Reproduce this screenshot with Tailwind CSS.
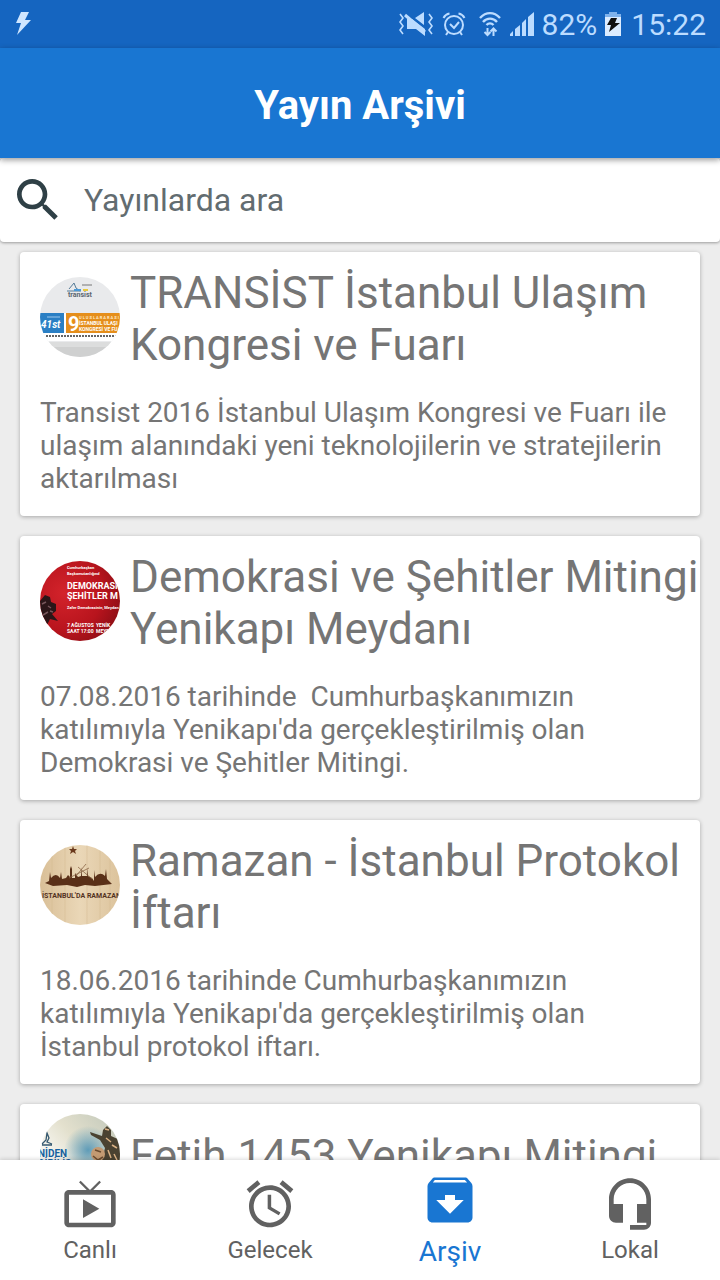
<!DOCTYPE html>
<html lang="tr">
<head>
  <meta charset="UTF-8">
  <meta name="viewport" content="width=device-width, initial-scale=1.0">
  <title>Yayın Arşivi</title>
  <script src="https://cdn.jsdelivr.net/npm/@tailwindcss/browser@4"></script>
</head>
<body class="h-screen flex flex-col overflow-hidden bg-[#ededed] text-[#757575] font-['Roboto',sans-serif]">

  <!-- status bar -->
  <div class="h-12 shrink-0 flex items-center justify-between pl-4 pr-[14px] bg-[#1565c0] text-[#bcdcff]">
    <svg class="w-4 h-6" viewBox="0 0 16 24" fill="#cfe6ff"><path d="M5 0h8L9 8h6L1 23l4-12H0z"/></svg>
    <div class="flex items-center">
      <svg class="w-9 h-7" viewBox="0 0 36 28" fill="#bcdcff">
        <path d="M26 2v13L17 8zM9 9h5l13 10v7l-9-7H9z"/>
        <path d="M7 5l20 17" stroke="#bcdcff" stroke-width="3"/>
        <path d="M2 4l3 4-3 4 3 4-3 4 3 4M31 4l3 4-3 4 3 4-3 4 3 4" fill="none" stroke="#bcdcff" stroke-width="1.6"/>
      </svg>
      <svg class="w-6 h-6 ml-2" viewBox="0 0 24 24" fill="none" stroke="#bcdcff" stroke-width="2">
        <circle cx="12" cy="13" r="9"/><path d="M1.500 6c1-2 3-4 6-4.500M22.500 6c-1-2-3-4-6-4.500M8 12l4 4 5-6M6 20l-2 3M18 20l2 3"/>
      </svg>
      <svg class="w-6 h-7 ml-3" viewBox="0 0 24 28" fill="none" stroke="#bcdcff" stroke-width="2.400">
        <path d="M2 8c6-6.500 14-6.500 20 0M5 12c4-4.500 10-4.500 14 0M8.500 15c2-2 5-2 7 0"/>
        <path d="M9.500 18v7M6.500 22l3 3 3-3M15.500 26v-7M12.500 21.500l3-3 3 3" stroke-width="2"/>
      </svg>
      <svg class="w-6 h-6 ml-2" viewBox="0 0 24 24" fill="#bcdcff">
        <path d="M0 24v-2l3-3v5zM5 24v-7l5-4v11zM12 24V11l4-4v17zM18 24V5l6-5v24z"/>
      </svg>
      <span class="ml-2 pt-px text-[30px] leading-9">82%</span>
      <svg class="w-4 h-6 ml-2" viewBox="0 0 16 24">
        <path d="M4 0h8v2h4v4H0V2h4z" fill="#7fb2ec"/><path d="M0 5h16v19H0z" fill="#dcecff"/>
        <path d="M6 6h6l-2 5h5L4 20l2-7H2z" fill="#111"/>
      </svg>
      <span class="ml-[10px] pt-px text-[30px] leading-9">15:22</span>
    </div>
  </div>

  <header class="relative z-10 h-[110px] shrink-0 flex items-center justify-center pt-[6px] bg-[#1976d2] shadow-[0_2px_6px_rgba(0,0,0,0.4)]">
    <h1 class="text-[40px] leading-[48px] font-bold text-white">Yayın Arşivi</h1>
  </header>

  <form class="h-[84px] shrink-0 flex items-center pl-[10px] pr-4 rounded bg-white shadow-[0_1px_3px_rgba(0,0,0,0.35)]">
    <label for="search" aria-label="Ara">
      <svg class="w-14 h-14" viewBox="0 0 24 24" fill="#2f4046"><path d="M15.500 14h-.79l-.28-.27C15.410 12.590 16 11.110 16 9.500 16 5.910 13.090 3 9.500 3S3 5.910 3 9.500 5.910 16 9.500 16c1.610 0 3.090-.59 4.230-1.570l.27.28v.79l5 4.990L20.490 19l-4.990-5zm-6 0C7.010 14 5 11.990 5 9.500S7.010 5 9.500 5 14 7.010 14 9.500 11.990 14 9.500 14z"/></svg>
    </label>
    <input id="search" type="text" placeholder="Yayınlarda ara" class="ml-[18px] flex-1 min-w-0 text-[32px] leading-10 text-[#37474f] placeholder:text-[#626c70] focus:outline-none">
  </form>

  <main class="flex-1 min-h-0 overflow-y-auto [scrollbar-width:none] flex flex-col gap-5 px-5 pt-[10px]">

    <article class="shrink-0 rounded bg-white pt-[10px] pb-[21px] shadow-[0_1px_4px_rgba(0,0,0,0.3)]">
      <div class="flex items-center gap-[10px] pl-5">
        <svg class="w-20 h-20 shrink-0 rounded-full" viewBox="0 0 80 80">
          <rect width="80" height="80" fill="#e9eaec"/>
          <path d="M29 12l5-6 2 5 4 3M27 14h14" fill="none" stroke="#557a96" stroke-width="1"/>
          <path d="M42 8h10" stroke="#777" stroke-width="1"/>
          <path d="M34 13h7" stroke="#4a9ad8" stroke-width="2"/><path d="M43 13h5" stroke="#e9c93c" stroke-width="2"/>
          <text x="28" y="20" font-size="7" font-weight="bold" fill="#5b6670">transist</text>
          <rect y="36" width="80" height="28" fill="#fff"/>
          <rect y="36" width="24" height="20" fill="#2a7fc4"/>
          <rect x="26" y="36" width="54" height="20" fill="#e58e1b"/>
          <path d="M7 40h13" stroke="#9cc8ec" stroke-width="1"/>
          <text x="1" y="51" font-size="10" font-weight="bold" font-style="italic" fill="#fff">41st</text>
          <text x="28" y="54" font-size="20" font-weight="bold" fill="#fff">9</text>
          <g font-weight="bold" fill="#fff">
            <text x="39" y="42" font-size="4" fill="#ffe9c7">U L U S L A R A R A S I</text>
            <text x="39" y="48" font-size="5">İSTANBUL ULAŞI</text>
            <text x="39" y="54" font-size="5">KONGRESİ VE FU</text>
          </g>
          <path d="M6 59h70" stroke="#333" stroke-width="1.500" stroke-dasharray="2 1"/>
          <rect y="65" width="80" height="5" fill="#dcdddd"/><rect y="70" width="80" height="10" fill="#cfd0d0"/>
        </svg>
        <h2 class="pt-[5px] pb-px text-[44px] leading-[52px]">TRANSİST İstanbul Ulaşım Kongresi ve Fuarı</h2>
      </div>
      <p class="mt-6 px-5 text-[28px] leading-[33px]">Transist 2016 İstanbul Ulaşım Kongresi ve Fuarı ile ulaşım alanındaki yeni teknolojilerin ve stratejilerin aktarılması</p>
    </article>

    <article class="shrink-0 rounded bg-white pt-[10px] pb-[21px] shadow-[0_1px_4px_rgba(0,0,0,0.3)]">
      <div class="flex items-center gap-[10px] pl-5">
        <svg class="w-20 h-20 shrink-0 rounded-full" viewBox="0 0 80 80">
          <defs><radialGradient id="red" cx="0.3" cy="0.4" r="0.8"><stop offset="0" stop-color="#d3232b"/><stop offset="0.600" stop-color="#b8141d"/><stop offset="1" stop-color="#860d14"/></radialGradient></defs>
          <rect width="80" height="80" fill="url(#red)"/>
          <path d="M0 40l5-6 5 2 1 5 5 2v7l-4 3 6 7-8-2-3 6-7 1z" fill="#2b1618"/>
          <path d="M2 43l4-2M8 45l3 2M3 54l5-3M10 50l3 1" stroke="#76555a" stroke-width="1.500"/>
          <g fill="#fff" font-weight="bold">
            <text x="27" y="8" font-size="4">Cumhurbaşkan</text>
            <text x="27" y="14" font-size="4">Başkomutanlığınd</text>
            <text x="27" y="28" font-size="9">DEMOKRASİ</text>
            <text x="27" y="38" font-size="9">ŞEHİTLER M</text>
            <text x="27" y="48" font-size="4">Zafer Demokrasinin, Meydan</text>
            <text x="27" y="66" font-size="5">7 AĞUSTOS</text><text x="56" y="66" font-size="5">YENİK</text>
            <text x="27" y="72" font-size="5">SAAT 17:00</text><text x="56" y="72" font-size="5">MEYD</text>
          </g>
        </svg>
        <h2 class="pt-[5px] pb-px text-[44px] leading-[52px]">Demokrasi ve Şehitler Mitingi Yenikapı Meydanı</h2>
      </div>
      <p class="mt-6 px-5 text-[28px] leading-[33px]">07.08.2016 tarihinde&nbsp; Cumhurbaşkanımızın katılımıyla Yenikapı'da gerçekleştirilmiş olan Demokrasi ve Şehitler Mitingi.</p>
    </article>

    <article class="shrink-0 rounded bg-white pt-[10px] pb-[21px] shadow-[0_1px_4px_rgba(0,0,0,0.3)]">
      <div class="flex items-center gap-[10px] pl-5">
        <svg class="w-20 h-20 shrink-0 rounded-full" viewBox="0 0 80 80">
          <defs><linearGradient id="wood"><stop offset="0" stop-color="#d9bf97"/><stop offset="0.500" stop-color="#ead7b7"/><stop offset="1" stop-color="#dcc39c"/></linearGradient></defs>
          <rect width="80" height="80" fill="url(#wood)"/>
          <path d="M12 0v80M25 0v80M47 0v80M60 0v80M70 0v80" stroke="#d2b88f" stroke-width="1" opacity="0.500"/>
          <path d="M33 1l1 3h3l-2 2 1 3-3-2-3 2 1-3-2-2h3z" fill="#6b3a1d"/>
          <path d="M5 38l4-2 1-9 1 6q5-6 9 0l1-6 1 7 4-1 2-3 2 2V24l1-3 1 3v9h3v-5l3 4 3-1V22l1 9h5v-8l1 8 4 2 2 3V25l1 7q5-6 10-1l1-7 1 10 5 5-17 2-10-1-8 2-10-2-14 1z" fill="#5a3018"/>
          <path d="M29 33l20-10M38 22l14 12M36 31l10-12" stroke="#8b6747" stroke-width="0.800"/>
          <text x="2" y="53" font-size="7" font-weight="bold" fill="#54321f">İSTANBUL'DA RAMAZAN</text>
        </svg>
        <h2 class="pt-[5px] pb-px text-[44px] leading-[52px]">Ramazan - İstanbul Protokol İftarı</h2>
      </div>
      <p class="mt-6 px-5 text-[28px] leading-[33px]">18.06.2016 tarihinde Cumhurbaşkanımızın katılımıyla Yenikapı'da gerçekleştirilmiş olan İstanbul protokol iftarı.</p>
    </article>

    <article class="shrink-0 rounded bg-white pt-[10px] pb-[21px] shadow-[0_1px_4px_rgba(0,0,0,0.3)]">
      <div class="flex items-center gap-[10px] pl-5">
        <svg class="w-20 h-20 shrink-0 rounded-full" viewBox="0 0 80 80">
          <defs><linearGradient id="sky" x1="0.200" y1="0.600" x2="0.900" y2="0"><stop offset="0" stop-color="#f6f5ef"/><stop offset="0.400" stop-color="#e3e0cd"/><stop offset="1" stop-color="#c3c9bb"/></linearGradient>
          <radialGradient id="sea" cx="0.600" cy="0.450" r="0.300"><stop offset="0" stop-color="#5f9cb8"/><stop offset="1" stop-color="#5f9cb8" stop-opacity="0"/></radialGradient></defs>
          <rect width="80" height="80" fill="url(#sky)"/><rect width="80" height="80" fill="url(#sea)"/>
          <path d="M2 30l4-4 1-7 2 5-2 4 5 2M2 31h10" fill="none" stroke="#345870" stroke-width="1.300"/>
          <text x="-2" y="43" font-size="10" font-weight="bold" fill="#1762a0">NİDEN</text>
          <text x="-2" y="53" font-size="10" font-weight="bold" fill="#1762a0">DİRİLİŞ</text>
          <path d="M50 18l12 4 1-6 4-4 4 4v6l9 4v54H66l-4-34 3-12-5-8-9-5z" fill="#4a4231"/>
          <circle cx="58" cy="40" r="7" fill="#c39a72"/>
          <path d="M53 42l5 4 5-3M55 36l6 2M60 46l5 5" stroke="#6b4c30" stroke-width="1.500" fill="none"/>
          <path d="M65 15l4 1M66 24l5 4M72 31l5 3M68 36l3 8M74 40l3 6" stroke="#d9b184" stroke-width="1.500"/>
        </svg>
        <h2 class="pt-[5px] pb-px text-[44px] leading-[52px]">Fetih 1453 Yenikapı Mitingi</h2>
      </div>
    </article>
  </main>

  <nav class="relative z-10 h-[120px] shrink-0 grid grid-cols-4 bg-white text-[24px] leading-7 text-[#616161] shadow-[0_-1px_4px_rgba(0,0,0,0.15)]">
    <a href="#canli" class="flex flex-col items-center pt-4">
      <svg class="w-14 h-14" viewBox="0 0 24 24" fill="currentColor"><path d="M21 6h-7.590l3.290-3.290L16 2l-4 4-4-4-.71.71L10.590 6H3c-1.100 0-2 .89-2 2v12c0 1.100.9 2 2 2h18c1.100 0 2-.9 2-2V8c0-1.110-.9-2-2-2zm0 14H3V8h18v12zM9 10v8l7-4z"/></svg>
      <span class="mt-1">Canlı</span>
    </a>
    <a href="#gelecek" class="flex flex-col items-center pt-4">
      <svg class="w-14 h-14" viewBox="0 0 24 24" fill="currentColor"><path d="M22 5.720l-4.600-3.860-1.290 1.530 4.600 3.860L22 5.720zM7.880 3.390L6.600 1.860 2 5.710l1.290 1.530 4.590-3.850zM12.500 8H11v6l4.750 2.850.75-1.230-4-2.370V8zM12 4c-4.970 0-9 4.030-9 9s4.020 9 9 9c4.970 0 9-4.030 9-9s-4.030-9-9-9zm0 16c-3.870 0-7-3.130-7-7s3.130-7 7-7 7 3.130 7 7-3.130 7-7 7z"/></svg>
      <span class="mt-1">Gelecek</span>
    </a>
    <a href="#arsiv" aria-current="page" class="flex flex-col items-center pt-[10px] text-[28px] leading-8 text-[#1976d2]">
      <svg class="w-[60px] h-[60px]" viewBox="0 0 24 24" fill="currentColor"><path d="M20.540 5.230l-1.390-1.680C18.880 3.210 18.470 3 18 3H6c-.47 0-.88.21-1.160.55L3.460 5.230C3.170 5.570 3 6.020 3 6.500V19c0 1.100.9 2 2 2h14c1.100 0 2-.9 2-2V6.500c0-.48-.17-.93-.46-1.270zM12 17.500L6.500 12H10v-2h4v2h3.500L12 17.500zM5.120 5l.81-1h12l.94 1H5.120z"/></svg>
      <span class="mt-[6px]">Arşiv</span>
    </a>
    <a href="#lokal" class="flex flex-col items-center pt-4">
      <svg class="w-14 h-14" viewBox="0 0 24 24" fill="currentColor"><path d="M12 1c-4.970 0-9 4.030-9 9v7c0 1.660 1.340 3 3 3h3v-8H5v-2c0-3.870 3.130-7 7-7s7 3.130 7 7v2h-4v8h4v1h-7v2h6c1.660 0 3-1.340 3-3V10c0-4.970-4.030-9-9-9z"/></svg>
      <span class="mt-1">Lokal</span>
    </a>
  </nav>

</body>
</html>
